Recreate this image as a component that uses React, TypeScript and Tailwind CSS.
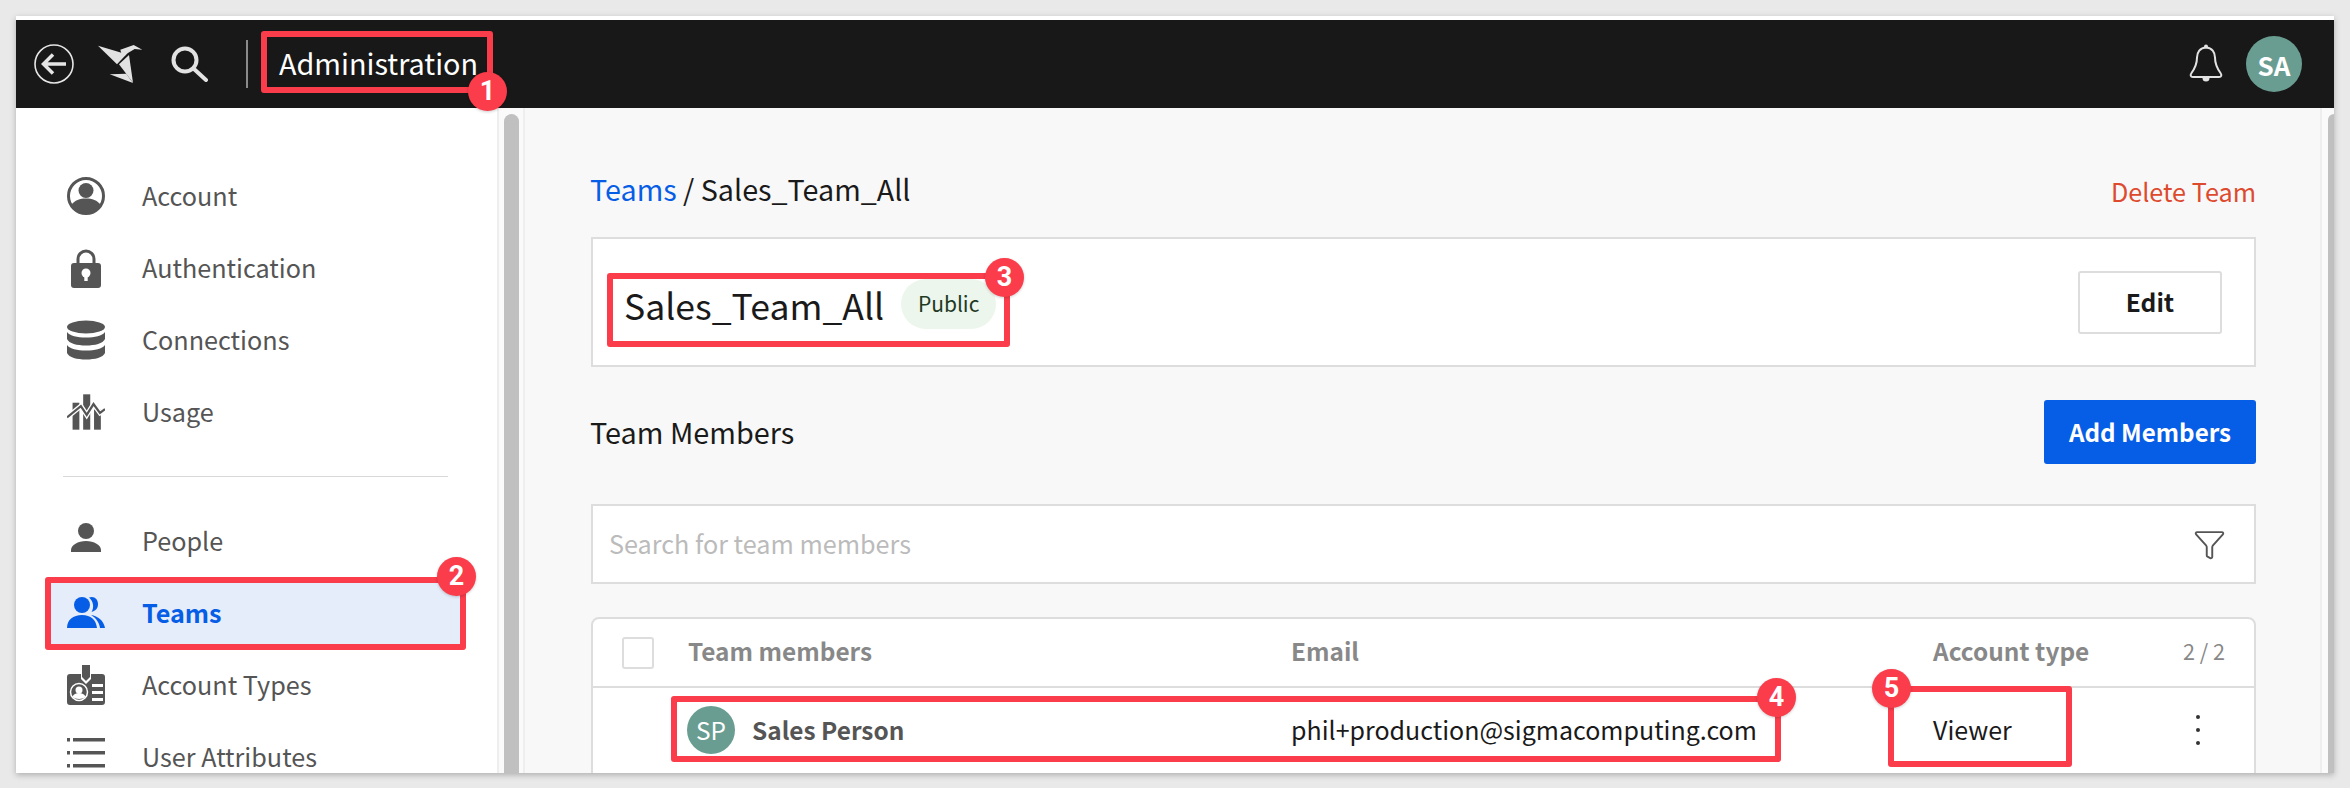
import { Filter } from "lucide-react";
import type { ReactNode } from "react";

const GREY = "#555555";

function AccountIcon() {
  return (
    <svg viewBox="0 0 38 40" className="h-10 w-[38px]" fill={GREY}>
      <circle cx="19" cy="20" r="17.5" fill="none" stroke={GREY} strokeWidth="3" />
      <circle cx="19" cy="14.5" r="7.5" />
      <path d="M4.5 29c3-5 8.500-6.500 14.500-6.500S30.500 24 33.500 29C30 34 25 37 19 37S8 34 4.500 29z" />
    </svg>
  );
}

function LockIcon() {
  return (
    <svg viewBox="0 0 38 40" className="h-10 w-[38px]" fill={GREY}>
      <path d="M11 18v-7a8 8 0 0 1 16 0v7" fill="none" stroke={GREY} strokeWidth="3" />
      <rect x="4" y="15" width="30" height="25" rx="3" />
      <circle cx="19" cy="25" r="4.500" fill="#fff" />
      <rect x="17.300" y="26" width="3.400" height="7" fill="#fff" />
    </svg>
  );
}

function DatabaseIcon() {
  return (
    <svg viewBox="0 0 38 40" className="h-10 w-[38px]" fill={GREY}>
      <ellipse cx="19" cy="7" rx="19" ry="6.500" />
      <path d="M0 12c3 4 10 5.500 19 5.500S35 16 38 12v7c-2 4.500-10 6.500-19 6.500S2 23.500 0 19z" />
      <path d="M0 25c3 4 10 5.500 19 5.500S35 29 38 25v8c-2 4.500-10 6.500-19 6.500S2 37.500 0 33z" />
    </svg>
  );
}

function UsageIcon() {
  return (
    <svg viewBox="0 0 43 40" className="h-10 w-[43px]" fill={GREY}>
      <rect x="6.300" y="9.500" width="7.700" height="30.500" />
      <rect x="18.300" y="0" width="8" height="40" />
      <rect x="30.600" y="17" width="7.700" height="23" />
      <path d="M0 26L15.700 13.300 22.300 23.300 30 11 37.300 21 43 16.700" fill="none" stroke="#fff" strokeWidth="5.500" />
      <path d="M0 26L15.700 13.300 22.300 23.300 30 11 37.300 21 43 16.700" fill="none" stroke={GREY} strokeWidth="2.500" />
    </svg>
  );
}

function PersonIcon() {
  return (
    <svg viewBox="0 0 38 40" className="h-10 w-[38px]" fill={GREY}>
      <circle cx="19" cy="10" r="8" />
      <path d="M4 31v-2c0-5 7-9 15-9s15 4 15 9v2z" />
    </svg>
  );
}

function TeamsIcon() {
  return (
    <svg viewBox="0 0 38 40" className="h-10 w-[38px]" fill="#065de6">
      <circle cx="15" cy="12" r="8" />
      <path d="M0 35c0-8 6-13 15-13s14 5 15 13z" />
      <path d="M22 4.500c5-2 9 1.500 9 6.500s-3 7-6.500 8c2.500-4 2.500-10-2.500-14.500z" />
      <path d="M24 22c7 1 13 6 14 13h-5c-.500-5-4-10-9-13z" />
    </svg>
  );
}

function BadgeIdIcon() {
  return (
    <svg viewBox="0 0 38 40" className="h-10 w-[38px]" fill={GREY}>
      <path d="M3 9h11v5l5 5 5-5V9h11a3 3 0 0 1 3 3v25a3 3 0 0 1-3 3H3a3 3 0 0 1-3-3V12a3 3 0 0 1 3-3z" />
      <path d="M15 0h8v12l-4 4-4-4z" />
      <circle cx="12" cy="27" r="8.500" fill="none" stroke="#fff" strokeWidth="1.500" />
      <circle cx="12" cy="25" r="3.500" fill="#fff" />
      <path d="M5.500 32c1-3 3.500-4 6.500-4s5.500 1 6.500 4c-3 2.500-10 2.500-13 0z" fill="#fff" />
      <rect x="25" y="19" width="11" height="3" fill="#fff" />
      <rect x="25" y="26" width="11" height="3" fill="#fff" />
      <rect x="25" y="33" width="11" height="3" fill="#fff" />
    </svg>
  );
}

function ListIcon() {
  return (
    <svg viewBox="0 0 38 40" className="h-10 w-[38px]" fill={GREY}>
      {[3, 16, 29, 42].map((y) => (
        <g key={y}>
          <rect x="0" y={y - 2} width="3" height="3.500" />
          <rect x="6" y={y - 2} width="32" height="3.500" />
        </g>
      ))}
    </svg>
  );
}

function SigmaLogo() {
  return (
    <svg viewBox="0 0 45 39" className="h-[39px] w-[45px]" fill="#e2e2e2">
      <path d="M0 .700L28.500 9.300 19 19.300z" />
      <path d="M22.300 4.700L35.700 0 44.300 4.700 36.700 4 30.300 7.700 24.500 12.500z" />
      <path d="M21 19.300L31 10 35 37.700z" />
      <path d="M11.700 29.300L28.300 28.700 35 38z" />
    </svg>
  );
}

function BackIcon() {
  return (
    <svg viewBox="0 0 40 40" className="h-10 w-10" fill="none" stroke="#e6e6e6">
      <circle cx="20" cy="20" r="19" strokeWidth="1.600" />
      <path d="M32 20H10M19 10.500L9.500 20l9.500 9.500" strokeWidth="3.500" />
    </svg>
  );
}

function SearchIcon() {
  return (
    <svg viewBox="0 0 37 36" className="h-9 w-[37px]" fill="none" stroke="#e2e2e2" strokeWidth="4">
      <circle cx="14" cy="14" r="11.500" />
      <path d="M23 23L35 34" strokeLinecap="round" />
    </svg>
  );
}

function BellIcon() {
  return (
    <svg viewBox="0 0 34 40" className="h-10 w-[34px]" fill="none" stroke="#e2e2e2" strokeWidth="2">
      <path d="M17 3.500c-6 0-9 5-9 10 0 6-1.500 10-5.500 15.500-1.500 2-1 4 1.500 4h26c2.500 0 3-2 1.500-4C27.500 23.500 26 19.500 26 13.500c0-5-3-10-9-10z" />
      <circle cx="17" cy="2.500" r="2" fill="#e2e2e2" stroke="none" />
      <path d="M13.500 34h7a3.500 3.500 0 0 1-7 0z" fill="#e2e2e2" stroke="none" />
    </svg>
  );
}

const firstGroup = [
  { label: "Account", icon: <AccountIcon /> },
  { label: "Authentication", icon: <LockIcon /> },
  { label: "Connections", icon: <DatabaseIcon /> },
  { label: "Usage", icon: <UsageIcon /> },
];

const secondGroup = [
  { label: "People", icon: <PersonIcon /> },
  { label: "Teams", icon: <TeamsIcon />, active: true },
  { label: "Account Types", icon: <BadgeIdIcon /> },
  { label: "User Attributes", icon: <ListIcon /> },
];

function NavRow({ label, icon, active }: { label: string; icon: ReactNode; active?: boolean }) {
  return (
    <div
      className={`ml-[30px] flex h-[72px] w-[419px] items-center gap-[37px] pb-[1px] pl-[21px] text-[25.2px] ${
        active ? "bg-[#e6edfa] font-semibold text-[#065de6]" : "text-[#555555]"
      }`}
    >
      <span className="flex w-[38px] shrink-0 justify-center">{icon}</span>
      {label}
    </div>
  );
}

function Marker({ className, n }: { className: string; n: number }) {
  return (
    <div
      className={`absolute flex size-[39px] items-center justify-center rounded-full bg-[#fa3c4b] font-['Roboto',sans-serif] text-[27px] font-bold text-white shadow-[0_1px_3px_rgba(0,0,0,0.2)] ${className}`}
    >
      {n}
    </div>
  );
}

export default function App() {
  return (
    <div className="relative h-[788px] w-[2350px] overflow-hidden bg-[#e9e9e9] pl-4 pr-[16px] pt-4 font-['Noto_Sans_CJK_SC','Liberation_Sans',sans-serif]">
      <div className="flex h-[757px] flex-col overflow-hidden border-t-4 border-white bg-white shadow-[0_2px_6px_rgba(0,0,0,0.25)]">
        <header className="flex h-[88px] shrink-0 items-center bg-[#181818] pl-[18px] pr-[32px] text-white">
          <BackIcon />
          <span className="ml-[24px]">
            <SigmaLogo />
          </span>
          <span className="ml-[28px]">
            <SearchIcon />
          </span>
          <div className="ml-[38px] h-[48px] w-[2px] bg-[#8a8a8a]" />
          <span className="ml-[31px] pb-[2px] text-[28.8px] leading-none">Administration</span>
          <span className="ml-auto">
            <BellIcon />
          </span>
          <div className="ml-[23px] flex size-14 items-center justify-center rounded-full bg-[#6a9d91] text-[26px] font-semibold">
            SA
          </div>
        </header>

        <div className="flex min-h-0 flex-1">
          <aside className="w-[481px] shrink-0 overflow-hidden bg-white pt-[52px]">
            {firstGroup.map((item) => (
              <NavRow key={item.label} {...item} />
            ))}
            <div className="my-[28px] ml-[47px] h-[1px] w-[385px] bg-[#d9d9d9]" />
            {secondGroup.map((item) => (
              <NavRow key={item.label} {...item} />
            ))}
          </aside>

          <div className="w-[28px] shrink-0 border-x-2 border-[#eeeeee] bg-[#fafafa] pl-[5px] pt-[6px]">
            <div className="h-full w-[15px] rounded-t-lg bg-[#c0c0c0]" />
          </div>

          <main className="min-w-0 flex-1 overflow-hidden bg-[#f8f8f8] pl-[66px] pr-[64px]">
            <div className="flex h-[129px] items-start justify-between pt-[59px]">
              <p className="-ml-[1px] text-[28.7px] leading-[44px] text-[#1a1a1a]">
                <span className="text-[#065de6]">Teams</span> / Sales_Team_All
              </p>
              <span className="pt-[4px] text-[25.2px] leading-[40px] text-[#dd4a2e]">Delete Team</span>
            </div>

            <section className="flex h-[130px] items-center border-2 border-[#dddddd] bg-white pl-[31px] pr-[32px]">
              <h1 className="pt-[6px] text-[35.6px] font-normal leading-none text-[#1a1a1a]">Sales_Team_All</h1>
              <span className="ml-[17px] mt-[4px] flex h-[50px] w-[95px] items-center justify-center rounded-full bg-[#edf6ec] text-[21px] text-[#1f3a25]">
                Public
              </span>
              <button
                type="button"
                className="ml-auto h-[63px] w-[144px] rounded-[3px] border-2 border-[#dddddd] bg-white text-[24.5px] font-semibold text-[#1a1a1a]"
              >
                Edit
              </button>
            </section>

            <div className="mt-[33px] flex h-[64px] items-center justify-between">
              <h2 className="-ml-[1px] text-[28.8px] font-normal text-[#1a1a1a]">Team Members</h2>
              <button
                type="button"
                className="h-[64px] w-[212px] rounded-[3px] bg-[#065de6] text-[24.2px] font-semibold text-white"
              >
                Add Members
              </button>
            </div>

            <div className="mt-[40px] flex h-[80px] items-center justify-between border-2 border-[#dddddd] bg-white pl-[16px] pr-[28px]">
              <span className="text-[25.2px] text-[#bbbbbb]">Search for team members</span>
              <Filter className="size-[33px] text-[#555555]" strokeWidth={1.4} />
            </div>

            <div className="mt-[33px] rounded-t-lg border-2 border-[#dddddd] bg-white">
              <div className="grid h-[69px] grid-cols-[95px_604px_641px_1fr] items-center border-b-2 border-[#dddddd] text-[24.4px] font-semibold text-[#888888]">
                <div className="pl-[29px]">
                  <span className="block size-8 rounded-[3px] border-2 border-[#dddddd]" />
                </div>
                <span className="pb-[3px]">Team members</span>
                <span className="-ml-[1px] pb-[3px]">Email</span>
                <div className="flex items-center justify-between pb-[3px] pr-[29px]">
                  <span>Account type</span>
                  <span className="text-[21.6px] font-normal">2 / 2</span>
                </div>
              </div>
              <div className="grid h-[86px] grid-cols-[95px_604px_641px_1fr] items-center pb-[2px] text-[25px] text-[#1a1a1a]">
                <span />
                <div className="-ml-[1px] flex items-center gap-[17px]">
                  <div className="flex size-12 items-center justify-center rounded-full bg-[#6a9d91] text-[24.4px] text-white">
                    SP
                  </div>
                  <span className="text-[24.4px] font-semibold text-[#555555]">Sales Person</span>
                </div>
                <span className="-ml-[1px]">phil+production@sigmacomputing.com</span>
                <div className="flex items-center justify-between pr-[54px]">
                  <span>Viewer</span>
                  <span className="flex flex-col gap-[9px]">
                    <span className="size-[4px] rounded-full bg-[#333333]" />
                    <span className="size-[4px] rounded-full bg-[#333333]" />
                    <span className="size-[4px] rounded-full bg-[#333333]" />
                  </span>
                </div>
              </div>
            </div>
          </main>

          <div className="w-[14px] shrink-0 border-l-2 border-[#eeeeee] bg-[#fafafa] pl-[6px] pt-[6px]">
            <div className="h-full w-full rounded-tl-lg bg-[#c0c0c0]" />
          </div>
        </div>
      </div>

      {/* red callouts drawn over the screenshot */}
      <div className="absolute left-[261px] top-[31px] h-[62px] w-[232px] rounded-[3px] border-[6px] border-[#fa3c4b]" />
      <Marker n={1} className="left-[468px] top-[72px]" />
      <div className="absolute left-[45px] top-[577px] h-[73px] w-[421px] rounded-[3px] border-[6px] border-[#fa3c4b]" />
      <Marker n={2} className="left-[437px] top-[557px]" />
      <div className="absolute left-[607px] top-[273px] h-[74px] w-[403px] rounded-[3px] border-[6px] border-[#fa3c4b]" />
      <Marker n={3} className="left-[985px] top-[258px]" />
      <div className="absolute left-[671px] top-[696px] h-[66px] w-[1110px] rounded-[3px] border-[6px] border-[#fa3c4b]" />
      <Marker n={4} className="left-[1757px] top-[678px]" />
      <div className="absolute left-[1888px] top-[686px] h-[81px] w-[184px] rounded-[3px] border-[6px] border-[#fa3c4b]" />
      <Marker n={5} className="left-[1872px] top-[669px]" />
    </div>
  );
}
